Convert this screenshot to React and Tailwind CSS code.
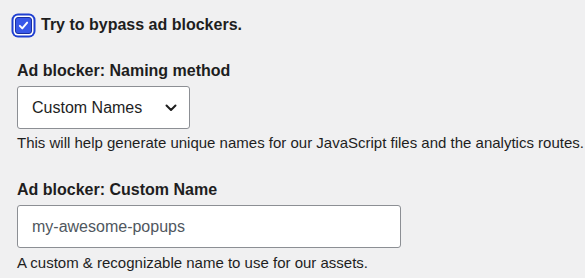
export default function App() {
  return (
    <div className="min-h-[278px] w-[585px] bg-[#f0f0f1] text-[#1e1e1e] font-['Liberation_Sans',Arial,sans-serif] overflow-hidden">
      <div className="pt-[15px] pl-[15px]">
        <label className="flex items-center gap-[9px]">
          <span className="flex h-[17px] w-[17px] items-center justify-center rounded-[3px] border border-[#1b2f9e] bg-[#3858e9] shadow-[0_0_0_1.5px_#ffffff,0_0_0_3.5px_#1f3fd1]">
            <svg viewBox="0 0 16 16" className="h-[13px] w-[13px]" fill="none" stroke="#ffffff" strokeWidth="2.4" strokeLinecap="round" strokeLinejoin="round">
              <path d="M3.5 8.5l3 3 6-7" />
            </svg>
          </span>
          <span className="text-[16px] font-bold leading-[20px]">Try to bypass ad blockers.</span>
        </label>
      </div>

      <div className="mt-[26px] px-[17px]">
        <div className="text-[16px] font-bold leading-[20px]">Ad blocker: Naming method</div>
        <div className="mt-[5px] flex h-[43px] w-[173px] items-center justify-between rounded-[3px] border border-[#8c8f94] bg-white pl-[14px] pr-[12px]">
          <span className="text-[16px]">Custom Names</span>
          <svg viewBox="0 0 12 8" className="h-[8px] w-[12px]" fill="none" stroke="#1e1e1e" strokeWidth="2" strokeLinecap="round" strokeLinejoin="round">
            <path d="M1.5 1.5l4.5 4.5 4.5-4.5" />
          </svg>
        </div>
        <p className="mt-[4px] text-[15px] leading-[20px] whitespace-nowrap">
          This will help generate unique names for our JavaScript files and the analytics routes.
        </p>
      </div>

      <div className="mt-[27px] px-[17px]">
        <div className="text-[16px] font-bold leading-[20px]">Ad blocker: Custom Name</div>
        <div className="mt-[5px] flex h-[43px] w-[384px] items-center rounded-[3px] border border-[#8c8f94] bg-white pl-[14px]">
          <span className="text-[16px] text-[#50575e]">my-awesome-popups</span>
        </div>
        <p className="mt-[5px] text-[15px] leading-[20px]">A custom &amp; recognizable name to use for our assets.</p>
      </div>
    </div>
  );
}
